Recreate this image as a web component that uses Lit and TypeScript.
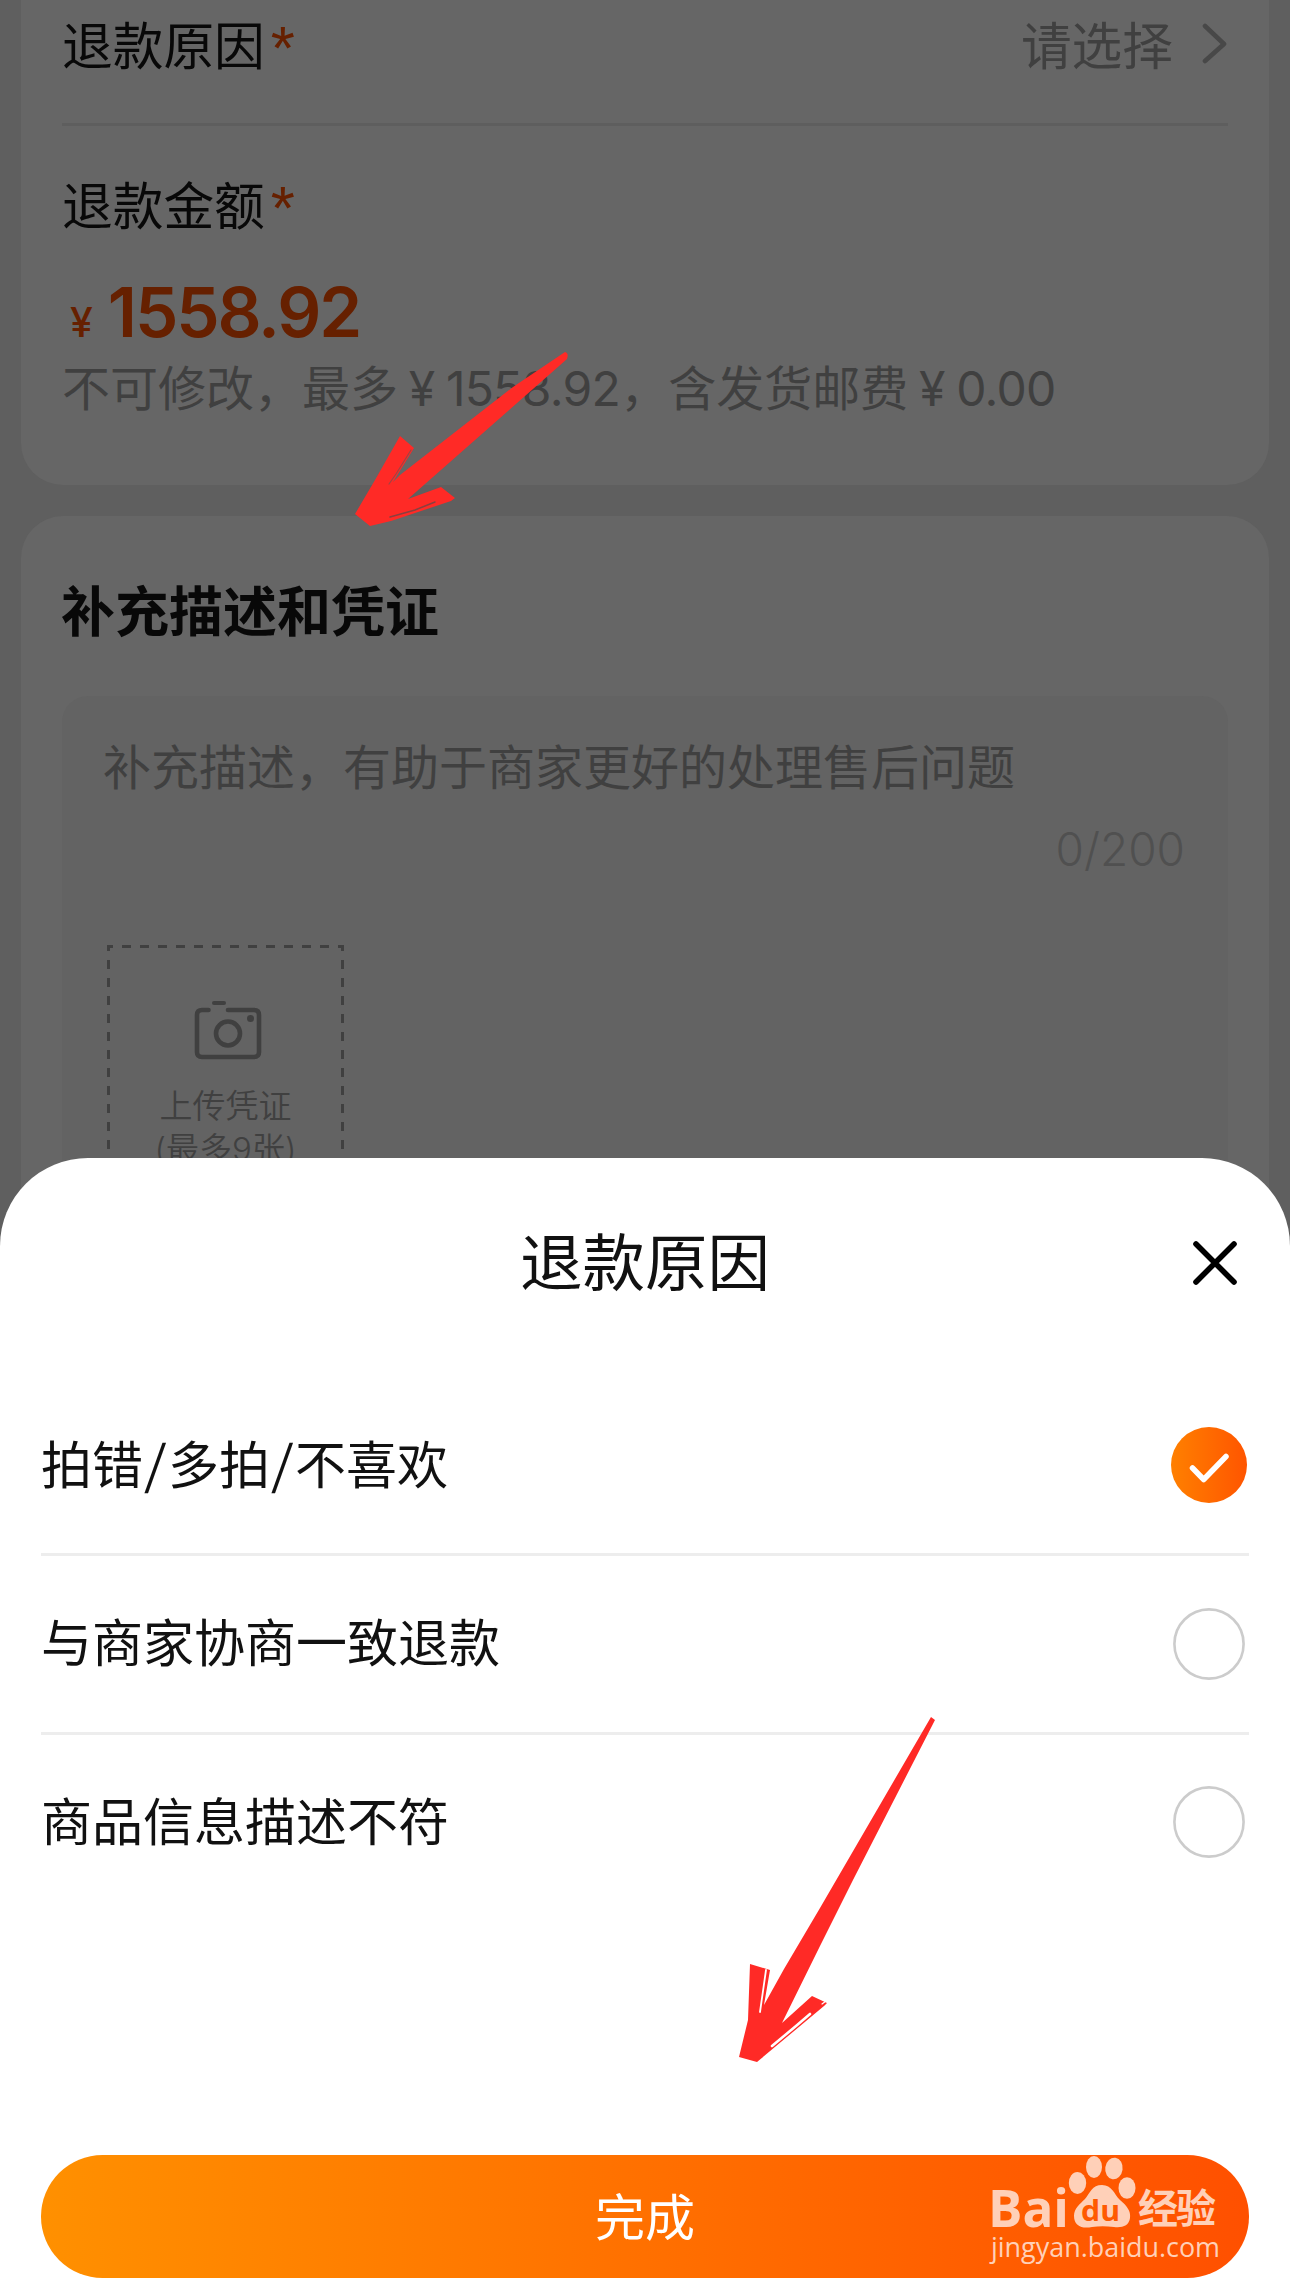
import { LitElement, html, css, svg } from "lit";
import { customElement, property, state } from "lit/decorators.js";

const FONT = css`Inter, "Noto Sans CJK SC", sans-serif`;

@customElement("option-row")
class OptionRow extends LitElement {
  @property() label = "";
  @property({ type: Boolean }) checked = false;

  static styles = css`
    :host { display: flex; align-items: center; justify-content: space-between; height: 176px; padding-right: 2px; }
    .label { display: flex; font: 400 51px/76px ${FONT}; color: #111; white-space: nowrap; padding-top: 1px; }
    .slash { width: 25px; text-align: center; font-size: 58px; font-weight: 300; transform: skewX(-5deg); }
    .mark { display: block; width: 76px; height: 76px; }
  `;

  render() {
    const parts = this.label.split("/");
    return html`
      <span class="label">${parts.map((p, i) => html`${i ? html`<span class="slash">/</span>` : ""}<span>${p}</span>`)}</span>
      ${this.checked
        ? html`<svg class="mark" viewBox="0 0 76 76">
            <defs><linearGradient id="g" x1="0" x2="1"><stop offset="0" stop-color="#ff8000" /><stop offset="1" stop-color="#ff5500" /></linearGradient></defs>
            <circle cx="38" cy="38" r="38" fill="url(#g)" />
            <path d="M21.500 41 L32.700 52.500 L55 29.500" fill="none" stroke="#fff" stroke-width="5.500" stroke-linecap="round" stroke-linejoin="round" />
          </svg>`
        : html`<svg class="mark" viewBox="0 0 76 76"><circle cx="38" cy="38" r="34.6" fill="#fff" stroke="#ccc" stroke-width="2.6" /></svg>`}
    `;
  }
}

@customElement("app-root")
class AppRoot extends LitElement {
  @state() private options = ["拍错/多拍/不喜欢", "与商家协商一致退款", "商品信息描述不符"];
  @state() private selected = 0;

  static styles = css`
    :host { display: block; position: relative; width: 1290px; height: 2293px; overflow: hidden; background: #5f5f5f; font-family: ${FONT}; }
    * { box-sizing: border-box; }
    .page { display: flex; flex-direction: column; gap: 31px; height: 1300px; padding: 0 21px; }
    .card { background: #666; padding: 0 41px; }
    .refund { height: 485px; border-radius: 0 0 42px 42px; }
    .extra { flex: 1; border-radius: 42px 42px 0 0; padding-top: 57px; }
    .row { display: flex; justify-content: space-between; height: 126px; padding-top: 9px; border-bottom: 3px solid #5e5e5e; }
    .label { font-size: 50.7px; line-height: 76px; color: #080808; white-space: nowrap; display: flex; height: 76px; }
    .star { color: #662000; margin-left: 6px; font-family: "Liberation Sans", sans-serif; font-size: 62px; line-height: 77px; }
    .choose { display: flex; font-size: 50.7px; line-height: 76px; color: #404040; }
    .chev { width: 26px; height: 76px; margin-left: 29px; }
    .amount { padding-top: 43px; }
    .price { display: flex; align-items: baseline; color: #662000; height: 84px; margin-top: 25px; line-height: 84px; padding-left: 8px; }
    .yen { font-size: 41px; font-weight: 500; }
    .num { font-size: 69px; font-weight: 600; margin-left: 15px; letter-spacing: -2.1px; }
    .hint { font-size: 48px; line-height: 70px; margin-top: 0; color: #404040; white-space: nowrap; }
    .hy { display: inline-block; width: 48px; text-align: center; }
    .digits { letter-spacing: -0.7px; }
    .title { font-size: 54px; line-height: 80px; font-weight: 700; color: #080808; margin-left: -1px; }
    .box { margin-top: 43px; height: 600px; border-radius: 26px 26px 0 0; background: #636363; padding: 37px 43px 0 42px; }
    .ph { font-size: 48px; line-height: 70px; color: #404040; white-space: nowrap; margin-left: -1px; }
    .count { font-size: 46px; line-height: 66px; margin-top: 13px; text-align: right; color: #505050; font-weight: 300; }
    .upload { display: flex; flex-direction: column; align-items: center; width: 237px; height: 237px; margin: 63px 0 0 3px; position: relative; }
    .dash { position: absolute; inset: 0; }
    .cam { width: 68px; height: 62px; margin: 54px 0 0 5px; }
    .up { font-size: 33px; line-height: 43px; color: #404040; font-weight: 350; white-space: nowrap; }
    .up.first { margin-top: 24px; }
    .sheet { position: absolute; left: 0; right: 0; top: 1158px; bottom: 0; background: #fff; border-radius: 88px 88px 0 0; padding: 0 41px; display: flex; flex-direction: column; }
    .head { display: grid; grid-template-columns: 72px 1fr 72px; align-items: center; height: 209px; }
    .head h2 { grid-column: 2; margin: 0; text-align: center; font-size: 62.5px; line-height: 90px; font-weight: 400; color: #111; }
    .close { width: 48px; height: 48px; justify-self: end; margin-right: 10px; }
    .list { margin-top: 10px; flex: 1; }
    .list option-row + option-row { border-top: 3px solid #ededed; height: 178.5px; }
    .done { display: flex; align-items: center; justify-content: center; height: 123px; margin-bottom: 15px; padding: 3px 0 0; border: 0; border-radius: 62px; background: linear-gradient(90deg, #ff9000, #ff5000); color: #fff; font: 400 50px/76px ${FONT}; }
    .over { position: absolute; inset: 0; pointer-events: none; }
    .wm { fill: #ffd0b8; }
    .latin { font-family: "Open Sans", sans-serif; }
    .cjk { font-family: "Noto Sans CJK SC", sans-serif; }
  `;

  private arrows() {
    return svg`
      <g fill="#ff2a26">
        <path d="M565 352 Q569 353 567 359 L408 499 L441 487 L455 498 L451 501 L391 521 L370 526 L355 514 L375 480 L400 436 L414 448 L393 482 L400 475 L513 387 Z" />
        <path d="M931 1717 L935 1720 L853 1880 L820 1946 L782 2023 L812 1996 L827 2003 L824 2006 L757 2062 L739 2057 L748 2020 L750 1964 L770 1970 L764 2005 L784 1969 L820 1908 Z" />
      </g>
      <g fill="none" stroke-linecap="round">
        <path d="M411 450 L396 474 L389 484" stroke="#a04444" stroke-width="1.2" />
        <path d="M435 502 L415 510 L390 517" stroke="#8a4040" stroke-width="1.5" />
        <path d="M766 1970 L760 2012" stroke="#fff" stroke-width="1.8" />
        <path d="M810 2014 L796 2026 L772 2046" stroke="#fff" stroke-width="2.6" />
        <path d="M822 2004 L826 2001" stroke="#fff" stroke-width="1.2" />
      </g>`;
  }

  private watermark() {
    return svg`
      <g class="wm">
        <text class="latin" x="988" y="2226.500" font-size="52" font-weight="700" textLength="81" lengthAdjust="spacingAndGlyphs">Bai</text>
        <ellipse cx="1077.500" cy="2183" rx="8.700" ry="11" />
        <ellipse cx="1094" cy="2167" rx="8" ry="11" />
        <ellipse cx="1114" cy="2168.500" rx="8.700" ry="10.800" transform="rotate(8 1114 2168)" />
        <ellipse cx="1127" cy="2188" rx="8.500" ry="10.800" />
        <path d="M1102 2185 C1112 2185 1114 2194 1120 2200 C1127 2206 1131 2211 1130 2218 C1129 2226 1122 2228 1114 2227 C1106 2226 1099 2226 1092 2227 C1082 2229 1074 2226 1074 2216 C1074 2208 1080 2204 1085 2199 C1090 2193 1092 2185 1102 2185 Z" />
        <text class="latin" x="1081" y="2221" font-size="29" font-weight="700" fill="#ff5a00" textLength="39" lengthAdjust="spacingAndGlyphs">du</text>
        <text class="cjk" x="1138" y="2223" font-size="40" font-weight="700" textLength="78">经验</text>
        <text class="latin" x="991" y="2257" font-size="27" font-weight="500" textLength="229" lengthAdjust="spacingAndGlyphs">jingyan.baidu.com</text>
      </g>`;
  }

  render() {
    return html`
      <div class="page">
        <section class="card refund">
          <div class="row">
            <div class="label">退款原因<span class="star">*</span></div>
            <div class="choose">请选择
              <svg class="chev" viewBox="0 0 26 76"><path d="M3 17 L22 35 L3 52" fill="none" stroke="#484848" stroke-width="4.600" stroke-linecap="round" stroke-linejoin="round" /></svg>
            </div>
          </div>
          <div class="amount">
            <div class="label">退款金额<span class="star">*</span></div>
            <div class="price"><span class="yen">¥</span><span class="num">1558.92</span></div>
            <div class="hint">不可修改，最多<span class="hy">¥</span><span class="digits">1558.92</span>，含发货邮费<span class="hy">¥</span><span class="digits">0.00</span></div>
          </div>
        </section>
        <section class="card extra">
          <div class="title">补充描述和凭证</div>
          <div class="box">
            <div class="ph">补充描述，有助于商家更好的处理售后问题</div>
            <div class="count">0/200</div>
            <div class="upload">
              <svg class="dash" width="237" height="237" fill="none" stroke="#404040" stroke-width="3" stroke-dasharray="9 9" stroke-dashoffset="3">
                <path d="M0 1.500 H237" /><path d="M1.500 0 V237" /><path d="M235.500 0 V237" />
              </svg>
              <svg class="cam" viewBox="0 0 68 62" fill="none" stroke="#404040" stroke-width="4.600" stroke-linecap="round">
                <path d="M14.500 11 H8 Q3 11 3 16 V53 Q3 58 8 58 H60 Q65 58 65 53 V16 Q65 11 60 11 H34" />
                <path d="M20 4 H30" stroke-width="4" />
                <circle cx="34" cy="34.500" r="12" />
                <circle cx="56.500" cy="19.500" r="3.500" fill="#404040" stroke="none" />
              </svg>
              <div class="up first">上传凭证</div>
              <div class="up">(最多9张)</div>
            </div>
          </div>
        </section>
      </div>
      <div class="sheet">
        <div class="head">
          <h2>退款原因</h2>
          <svg class="close" viewBox="0 0 48 48"><path d="M5 5 L43 43 M43 5 L5 43" stroke="#000" stroke-width="5.600" stroke-linecap="round" /></svg>
        </div>
        <div class="list">
          ${this.options.map((o, i) => html`<option-row .label=${o} ?checked=${i === this.selected} @click=${() => (this.selected = i)}></option-row>`)}
        </div>
        <button class="done">完成</button>
      </div>
      <svg class="over" width="1290" height="2293" viewBox="0 0 1290 2293">${this.arrows()}${this.watermark()}</svg>
    `;
  }
}
